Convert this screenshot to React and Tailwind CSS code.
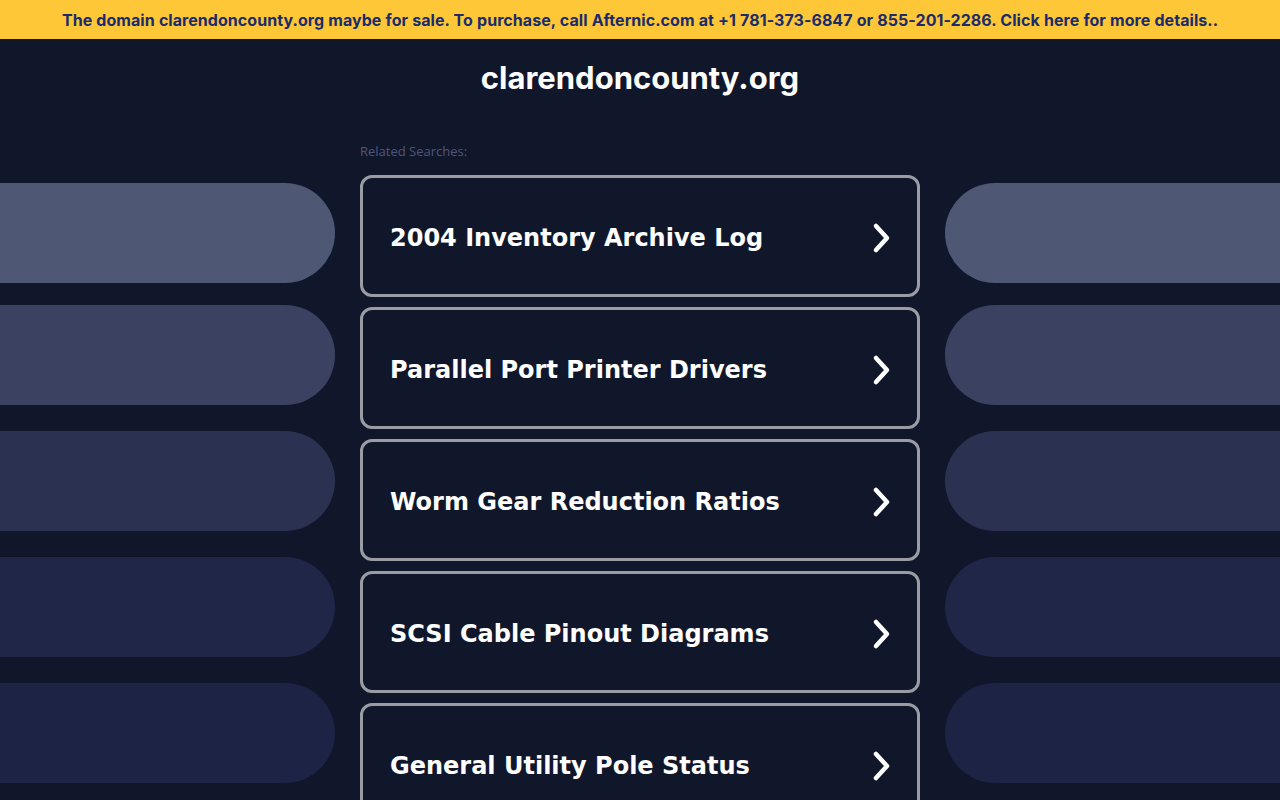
import React from "react";

const searches = [
  "2004 Inventory Archive Log",
  "Parallel Port Printer Drivers",
  "Worm Gear Reduction Ratios",
  "SCSI Cable Pinout Diagrams",
  "General Utility Pole Status",
];

const pills = [
  { color: "bg-[#4e5773]", mt: "mt-0" },
  { color: "bg-[#3b4261]", mt: "mt-[22px]" },
  { color: "bg-[#2b3150]", mt: "mt-[26px]" },
  { color: "bg-[#1f2648]", mt: "mt-[26px]" },
  { color: "bg-[#1c2345]", mt: "mt-[26px]" },
];

const Chevron = () => (
  <svg width="22" height="32" viewBox="0 0 22 32" fill="none">
    <path
      d="M5 4 L16 16 L5 28"
      stroke="white"
      strokeWidth="4.5"
      strokeLinecap="round"
      strokeLinejoin="round"
    />
  </svg>
);

const SearchCard = ({ label }) => (
  <a
    href="#"
    className="flex h-[122px] items-center justify-between rounded-[12px] border-[3px] border-[#9a9ca3] pl-[27px] pr-[24px] pt-[3px]"
  >
    <span
      className="text-[24px] font-bold text-white"
      style={{ fontFamily: '"DejaVu Sans", Verdana, sans-serif' }}
    >
      {label}
    </span>
    <Chevron />
  </a>
);

export default function App() {
  return (
    <div className="min-h-screen overflow-hidden bg-[#11172b]">
      <div
        className="flex h-[39px] items-center justify-center whitespace-nowrap bg-[#fec737] text-[16px] font-bold tracking-[0.05px] text-[#1a2c6b]"
        style={{ fontFamily: "Inter, sans-serif", letterSpacing: "0.05px", wordSpacing: "0.3px" }}
      >
        The domain clarendoncounty.org maybe for sale. To purchase, call Afternic.com at +1 781-373-6847 or 855-201-2286. Click here for more details..
      </div>

      <h1
        className="mt-[21px] text-center text-[31px] font-bold leading-[36px] text-white"
        style={{ fontFamily: "Inter, sans-serif" }}
      >
        clarendoncounty.org
      </h1>

      <div className="flex">
        <div className="mt-[87px] flex w-[335px] flex-col">
          {pills.map((p, i) => (
            <div key={i} className={`h-[100px] rounded-r-full ${p.color} ${p.mt}`} />
          ))}
        </div>

        <div className="ml-[25px] w-[560px]">
          <div
            className="mt-[46px] mb-[15px] text-[13px] leading-[18px] text-[#4f5577]"
            style={{ fontFamily: '"Open Sans", sans-serif' }}
          >
            Related Searches:
          </div>
          <div className="flex flex-col gap-[10px]">
            {searches.map((s) => (
              <SearchCard key={s} label={s} />
            ))}
          </div>
        </div>

        <div className="ml-[25px] mt-[87px] flex flex-1 flex-col">
          {pills.map((p, i) => (
            <div key={i} className={`h-[100px] rounded-l-full ${p.color} ${p.mt}`} />
          ))}
        </div>
      </div>
    </div>
  );
}
